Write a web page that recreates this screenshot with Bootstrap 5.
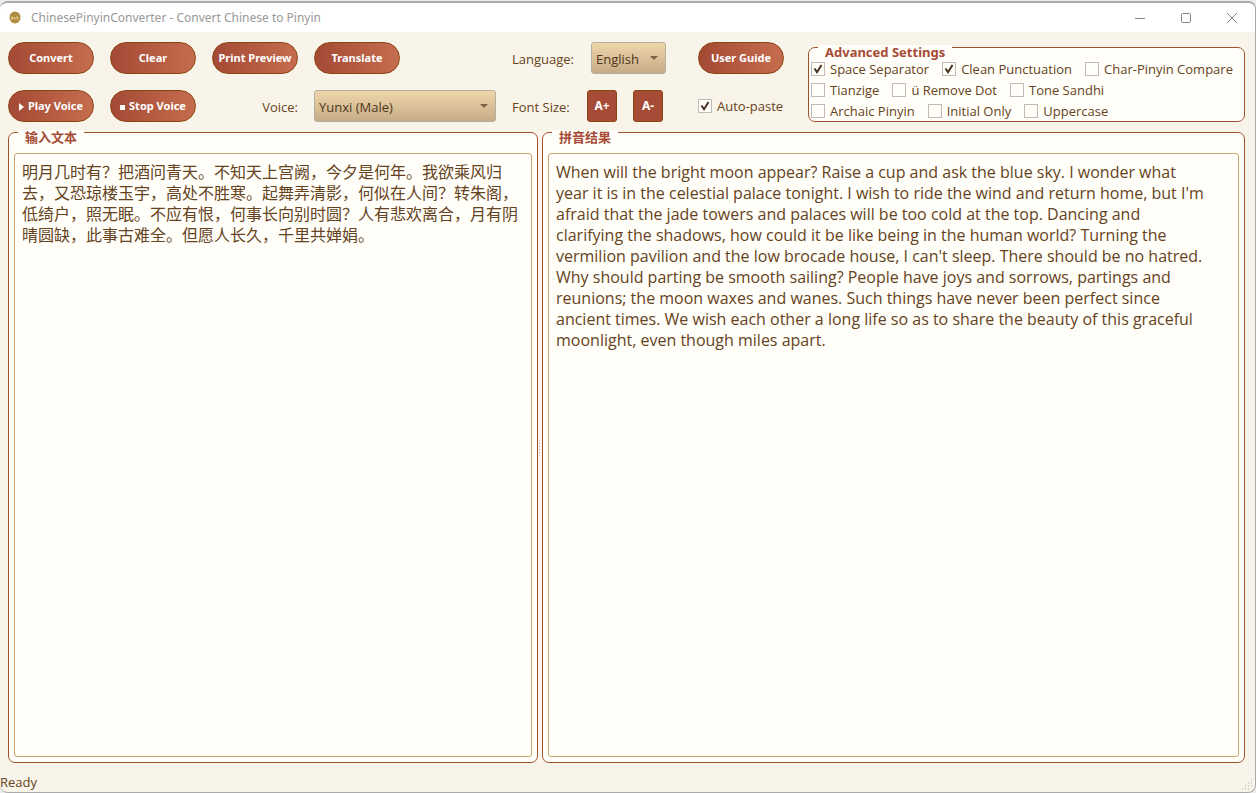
<!DOCTYPE html>
<html lang="en">
<head>
<meta charset="utf-8">
<meta name="viewport" content="width=device-width, initial-scale=1">
<title>ChinesePinyinConverter - Convert Chinese to Pinyin</title>
<link href="https://cdn.jsdelivr.net/npm/bootstrap@5.3.0/dist/css/bootstrap.min.css" rel="stylesheet">
<style>
:root{--ink:#654321;--accent:#a64b35;--rim:#a0522d;--paper:#fffef9;--cream:#f9f4e9}
body{font-family:"Open Sans","Noto Sans CJK SC",sans-serif;font-size:13px;line-height:20px;color:var(--ink);background:#ececec}
.app-window{height:100vh;padding-top:1px}
.app-frame{background:var(--cream);border:1px solid #aaa;border-width:2px 1px 1px 0;border-radius:8px;overflow:hidden}
.title-bar{height:29px;background:#fff;color:#999;font-size:12px}
.title-bar>svg{margin-right:9px}
.win-btn{width:46px;height:27px;border:0;background:none;color:#888}
.tool-grid{display:grid;grid-template-columns:86px 86px 86px 182px 170px 94px minmax(0,1fr);grid-template-rows:32px 32px;gap:16px;padding:10px 10px 0 8px}
.title-bar,.pill,.size-btn,.group-box>legend{font-family:"Noto Sans","Noto Sans CJK SC",sans-serif}
.pill,.size-btn,.group-box>legend{font-weight:700}
.pill{height:32px;width:86px;padding:0;border:1px solid #8b4513;border-radius:16px;background:linear-gradient(90deg,#a44a35,#c66c4e);color:#fff;font-size:11px;line-height:16px;white-space:nowrap}
.pill:hover{color:#fff}
.pill svg{margin-right:4px}
.size-btn{flex:none;width:30px;height:32px;padding:0;border:1px solid #8b4513;border-radius:3px;background:var(--accent);color:#fff;font-size:12px}
.size-row{padding-right:19px}
.field-name{padding-top:2px}
.drop{height:32px;padding:2px 20px 0 4px;border:1px solid #b5afa2;border-radius:3px;color:#4f3520;font-size:13px;line-height:20px;background:url("data:image/svg+xml,%3Csvg xmlns='http://www.w3.org/2000/svg' width='8' height='4'%3E%3Cpath d='M0 0h8L4 4z' fill='%237d6248'/%3E%3C/svg%3E") no-repeat right 7px center,linear-gradient(#efd6ab,#c5ac86)}
.lang-drop{width:75px}
.group-box{position:relative;border:1px solid var(--rim);border-radius:7px;background:var(--paper);min-width:0}
.group-box>legend{position:absolute;top:-3px;left:9px;float:none;width:auto;margin:0;padding:0 7px;background:var(--paper);color:var(--accent);font-size:13px;line-height:14px}
.adv-box{grid-column:7;grid-row:1/3;margin-top:5px;padding:10px 2px 0}
.check-line{height:21px;gap:13px}
.tick{display:flex;align-items:center;gap:5px;white-space:nowrap}
.tick input{appearance:none;flex:none;width:14px;height:14px;margin:0;border:1px solid #c0bcb5;background:var(--paper)}
.tick input:checked{background:var(--paper) url("data:image/svg+xml,%3Csvg xmlns='http://www.w3.org/2000/svg' width='12' height='12'%3E%3Cpath d='M2.5 5.5L5 9.2L9.5 2' fill='none' stroke='%234a3020' stroke-width='2'/%3E%3C/svg%3E") center no-repeat}
.split{display:grid;grid-template-columns:minmax(0,530fr) 4px minmax(0,703fr);padding:10px 10px 0 8px}
.split .group-box{padding:20px 5px 5px}
.page-text{resize:none;border:1px solid #c8a870;border-radius:3px;background:var(--paper);color:var(--ink);font-size:16px;line-height:21px;padding:8px 7px;box-shadow:none}
.page-text:focus{background:var(--paper);color:var(--ink);box-shadow:none}
.latin-text{padding-right:30px}
.grip{background:#fdf5ef}
.status-bar{height:29px}
</style>
</head>
<body>
<div class="app-window d-flex flex-column">
<div class="app-frame flex-grow-1 d-flex flex-column">
<header class="title-bar d-flex align-items-center">
<svg class="ms-2" width="14" height="14" viewBox="0 0 14 14" aria-hidden="true"><ellipse cx="7" cy="6.500" rx="5.500" ry="6" fill="#b08d3e"/><path d="M3.500 9V6h1.500v1.500H4M6.500 6v2.500M8 8.500V6h2v2.500" fill="none" stroke="#e7d6a4" stroke-width=".8"/></svg>
<span class="flex-grow-1">ChinesePinyinConverter - Convert Chinese to Pinyin</span>
<button class="win-btn p-0" aria-label="Minimize"><svg width="12" height="12"><path d="M1 6.500h10" stroke="currentColor"/></svg></button>
<button class="win-btn p-0" aria-label="Maximize"><svg width="12" height="12"><rect x="1.500" y="1.500" width="9" height="9" rx="1" fill="none" stroke="currentColor"/></svg></button>
<button class="win-btn p-0" aria-label="Close"><svg width="12" height="12"><path d="M1 1l10 10M11 1L1 11" stroke="currentColor"/></svg></button>
</header>
<div class="tool-grid">
<button class="btn pill">Convert</button>
<button class="btn pill">Clear</button>
<button class="btn pill">Print Preview</button>
<button class="btn pill">Translate</button>
<div class="d-flex align-items-center">
<label for="lang" class="field-name flex-grow-1">Language:</label>
<select id="lang" class="form-select drop lang-drop me-3"><option>English</option><option>中文</option></select>
</div>
<button class="btn pill">User Guide</button>
<fieldset class="group-box adv-box">
<legend>Advanced Settings</legend>
<div class="check-line d-flex">
<label class="tick"><input type="checkbox" checked>Space Separator</label>
<label class="tick"><input type="checkbox" checked>Clean Punctuation</label>
<label class="tick"><input type="checkbox">Char-Pinyin Compare</label>
</div>
<div class="check-line d-flex">
<label class="tick"><input type="checkbox">Tianzige</label>
<label class="tick"><input type="checkbox">ü Remove Dot</label>
<label class="tick"><input type="checkbox">Tone Sandhi</label>
</div>
<div class="check-line d-flex">
<label class="tick"><input type="checkbox">Archaic Pinyin</label>
<label class="tick"><input type="checkbox">Initial Only</label>
<label class="tick"><input type="checkbox">Uppercase</label>
</div>
</fieldset>
<button class="btn pill"><svg width="5" height="8"><path d="M0 0l5 4L0 8z" fill="#fff"/></svg>Play Voice</button>
<button class="btn pill"><svg width="5" height="5"><path d="M0 0h5v5H0z" fill="#fff"/></svg>Stop Voice</button>
<label for="voice" class="field-name align-self-center text-end">Voice:</label>
<select id="voice" class="form-select drop"><option>Yunxi (Male)</option></select>
<div class="size-row d-flex align-items-center gap-3">
<span class="field-name flex-grow-1 text-nowrap">Font Size:</span>
<button class="btn size-btn">A+</button>
<button class="btn size-btn">A-</button>
</div>
<label class="tick"><input type="checkbox" checked>Auto-paste</label>
</div>
<main class="split flex-grow-1">
<fieldset class="group-box d-flex">
<legend>输入文本</legend>
<textarea class="form-control page-text" aria-label="输入文本" spellcheck="false" lang="zh-CN">明月几时有？把酒问青天。不知天上宫阙，今夕是何年。我欲乘风归去，又恐琼楼玉宇，高处不胜寒。起舞弄清影，何似在人间？转朱阁，低绮户，照无眠。不应有恨，何事长向别时圆？人有悲欢离合，月有阴晴圆缺，此事古难全。但愿人长久，千里共婵娟。</textarea>
</fieldset>
<div class="grip d-flex align-items-center justify-content-center"><svg width="2" height="18"><path d="M.5 1v16" stroke="#bbb" stroke-dasharray="1 2"/></svg></div>
<fieldset class="group-box d-flex">
<legend>拼音结果</legend>
<textarea class="form-control page-text latin-text" aria-label="拼音结果" spellcheck="false">When will the bright moon appear? Raise a cup and ask the blue sky. I wonder what year it is in the celestial palace tonight. I wish to ride the wind and return home, but I'm afraid that the jade towers and palaces will be too cold at the top. Dancing and clarifying the shadows, how could it be like being in the human world? Turning the vermilion pavilion and the low brocade house, I can't sleep. There should be no hatred. Why should parting be smooth sailing? People have joys and sorrows, partings and reunions; the moon waxes and wanes. Such things have never been perfect since ancient times. We wish each other a long life so as to share the beauty of this graceful moonlight, even though miles apart.</textarea>
</fieldset>
</main>
<footer class="status-bar d-flex align-items-end justify-content-between"><span>Ready</span>
<svg width="14" height="13" aria-hidden="true"><path d="M10 1h1M7 4h1M10 4h1M4 7h1M7 7h1M10 7h1M1 10h1M4 10h1M7 10h1" stroke="#b5b0a6"/></svg></footer>
</div>
</div>
<script src="https://cdn.jsdelivr.net/npm/bootstrap@5.3.0/dist/js/bootstrap.bundle.min.js"></script>
</body>
</html>
